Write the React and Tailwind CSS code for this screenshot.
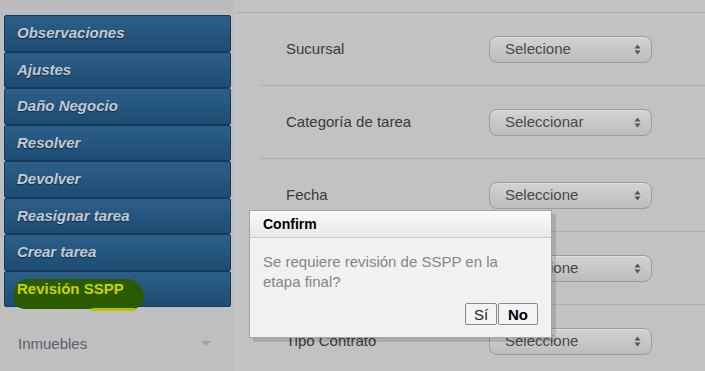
const menu = [
  'Observaciones',
  'Ajustes',
  'Daño Negocio',
  'Resolver',
  'Devolver',
  'Reasignar tarea',
  'Crear tarea',
];

const rows = [
  { label: 'Sucursal', value: 'Selecione' },
  { label: 'Categoría de tarea', value: 'Seleccionar' },
  { label: 'Fecha', value: 'Seleccione' },
  { label: '', value: 'Seleccione' },
  { label: 'Tipo Contrato', value: 'Seleccione' },
];

function SelectBox({ value }) {
  return (
    <div className="flex h-[27px] w-[163px] items-center justify-between rounded-[8px] border border-[#9c9c9c] bg-gradient-to-b from-[#d3d3d3] to-[#bcbcbc] pl-[15px] pr-[10px] text-[15px] text-[#4a4a4a] shadow-[inset_0_1px_0_rgba(255,255,255,0.25)]">
      <span>{value}</span>
      <svg width="7" height="11" viewBox="0 0 7 11">
        <path d="M3.5 0.5 L6.5 4.5 L0.5 4.5 Z" fill="#555" />
        <path d="M3.5 10.5 L6.5 6.5 L0.5 6.5 Z" fill="#555" />
      </svg>
    </div>
  );
}

function MenuButton({ children }) {
  return (
    <div className="flex h-[36.5px] items-center rounded-[2px] border border-[#163a5b] bg-gradient-to-b from-[#2c5f88] to-[#1d4c74] pl-[12px] text-[15px] font-bold italic text-[#c3cad2] [text-shadow:0_1px_1px_rgba(0,0,0,0.45)]">
      {children}
    </div>
  );
}

export default function App() {
  return (
    <div className="relative flex h-[371px] w-[705px] overflow-hidden bg-[#c2c2c2] font-['Liberation_Sans',Arial,sans-serif]">
      <aside className="flex w-[234px] shrink-0 flex-col bg-[#bfbfbf]">
        <div className="h-[15px] shrink-0 bg-[#bcbcbc]" />
        <div className="ml-[4px] w-[227px] shrink-0">
          {menu.map(m => (
            <MenuButton key={m}>{m}</MenuButton>
          ))}
          <div className="relative flex h-[36.5px] items-center rounded-[2px] border border-[#163a5b] bg-gradient-to-b from-[#2c5f88] to-[#1d4c74] pl-[12px]">
            <span className="absolute left-[9px] top-[7px] h-[30px] w-[130px] rounded-[14px_18px_12px_10px] bg-[#2a5b00]" />
            <span className="absolute left-[86px] top-[36px] h-[3px] w-[44px] rounded-full bg-[#b7bf00]" />
            <span className="relative text-[15px] font-bold text-[#c9d300]">Revisión SSPP</span>
          </div>
        </div>
        <div className="mt-[26px] flex items-center justify-between pl-[18px] pr-[23px] text-[15px] text-[#58606c]">
          <span>Inmuebles</span>
          <svg width="10" height="6" viewBox="0 0 10 6">
            <path d="M0 0 L10 0 L5 5 Z" fill="#98a3b1" />
          </svg>
        </div>
      </aside>

      <main className="flex flex-1 flex-col">
        <div className="ml-[2px] h-[13px] shrink-0 border-b border-[#a9a9a9] bg-[#c2c2c2]" />
        <div className="ml-[27px] shrink-0">
          {rows.map((r, i) => (
            <div
              key={i}
              className="flex h-[73px] items-center border-b border-[#adadad] pl-[25px] text-[15px] text-[#3a3a3a]"
            >
              <span className="w-[203px]">{r.label}</span>
              <SelectBox value={r.value} />
            </div>
          ))}
        </div>
      </main>

      <div className="absolute left-[249px] top-[210px] w-[303px] border border-[#a4a4a4] bg-[#f1f1f1] shadow-[4px_4px_0_rgba(0,0,0,0.12)]">
        <div className="flex h-[27px] items-center border-b border-[#c9c9c9] bg-gradient-to-b from-[#fafafa] to-[#e8e8e8] pl-[13px] text-[14px] font-bold text-black">
          Confirm
        </div>
        <div className="px-[13px] pt-[14px] text-[15px] leading-[20px] text-[#858585]">
          Se requiere revisión de SSPP en la
          <br />
          etapa final?
        </div>
        <div className="flex justify-end gap-[1px] pr-[13px] pt-[11px] pb-[12px]">
          <button className="h-[22px] w-[32px] rounded-[2px] border border-[#8a8a8a] bg-[#f3f3f3] text-[15px] text-[#222]">
            Sí
          </button>
          <button className="h-[22px] w-[40px] rounded-[2px] border border-[#8a8a8a] bg-[#f3f3f3] text-[15px] font-bold text-black">
            No
          </button>
        </div>
      </div>
    </div>
  );
}
